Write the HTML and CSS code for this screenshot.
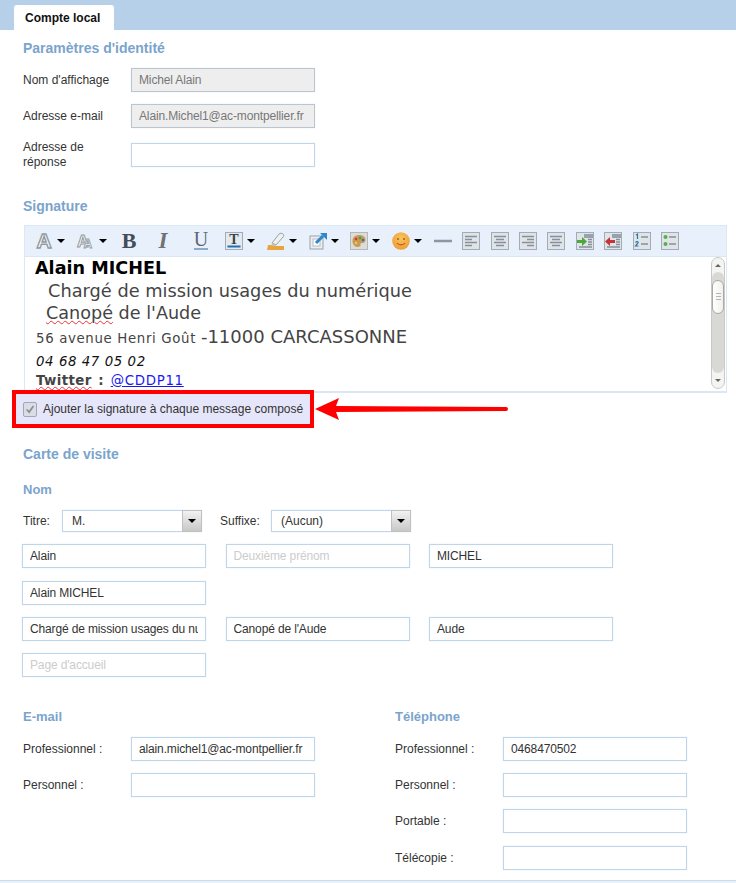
FILE: index.html
```html
<!DOCTYPE html>
<html lang="fr">
<head>
    <meta charset="UTF-8">
    <title>Compte local</title>
    <link rel="stylesheet" href="styles.css">
</head>
<body>
    <div class="tab-bar">
        <div class="tab">Compte local</div>
    </div>

    <div class="content">
        <h2 class="section-title title-identity">Paramètres d'identité</h2>
        <div class="form-row">
            <label>Nom d'affichage</label>
            <input type="text" class="field field-locked" value="Michel Alain" readonly>
        </div>
        <div class="form-row">
            <label>Adresse e-mail</label>
            <input type="text" class="field field-locked" value="Alain.Michel1@ac-montpellier.fr" readonly>
        </div>
        <div class="form-row">
            <label class="label-wrap">Adresse de réponse</label>
            <input type="text" class="field">
        </div>

        <h2 class="section-title title-signature">Signature</h2>
        <div class="editor">
            <div class="toolbar">
                <svg class="tool" viewBox="0 0 18 18"><text x="9" y="16" text-anchor="middle" class="ic-a">A</text></svg>
                <span class="caret"></span>
                <svg class="tool" viewBox="0 0 18 18"><text x="0" y="15" class="ic-a ic-a-md">A<tspan class="ic-a-sm" dx="-5" dy="1">A</tspan></text></svg>
                <span class="caret"></span>
                <svg class="tool tool-b" viewBox="0 0 18 18"><text x="9" y="16" text-anchor="middle" class="ic-b">B</text></svg>
                <svg class="tool tool-i" viewBox="0 0 18 18"><text x="9" y="16" text-anchor="middle" class="ic-i">I</text></svg>
                <svg class="tool tool-u" viewBox="0 0 18 18"><text x="9" y="14" text-anchor="middle" class="ic-u">U</text><path d="M2 17h14" stroke="#6d93bd" stroke-width="1.5"/></svg>
                <svg class="tool" viewBox="0 0 18 18"><rect x=".5" y=".5" width="17" height="17" fill="#e4e9ee" stroke="#a4adb6"/><text x="9" y="12" text-anchor="middle" class="ic-t">T</text><path d="M2.500 14.500h13" stroke="#1f6fb5" stroke-width="2"/></svg>
                <span class="caret"></span>
                <svg class="tool" viewBox="0 0 18 18"><path d="M5 11l7-9c1-1 3-1 4 0s1 2 0 3l-7 8-4-2z" fill="#eef0f1" stroke="#9aa2a8"/><path d="M1 13h4l4 1h8v4H0z" fill="#e8a53e"/><path d="M5 11l-1 3h5z" fill="#c9c2a8"/></svg>
                <span class="caret"></span>
                <svg class="tool" viewBox="0 0 18 18"><rect x="1" y="4" width="13" height="13" fill="#eceef0" stroke="#99a2aa"/><rect x="4" y="7" width="7" height="7" fill="#fff" stroke="#b8bec4"/><path d="M7 11l7-7" stroke="#2d87c9" stroke-width="3"/><path d="M11 1h7v7z" fill="#2d87c9"/></svg>
                <span class="caret"></span>
                <svg class="tool" viewBox="0 0 18 18"><rect x=".5" y=".5" width="17" height="17" fill="#dcdcd8" stroke="#b5b8ba"/><path d="M2.500 9c0-4 3-6 7-6s6 2.500 6 5-2 3-3.500 3-2 1-1.500 2-1 2-3 2-5-2-5-6z" fill="#c9995c"/><circle cx="6" cy="7" r="1.300" fill="#d33"/><circle cx="10" cy="6" r="1.300" fill="#3a3"/><circle cx="13" cy="8" r="1.300" fill="#27b"/><circle cx="6" cy="11" r="1.300" fill="#ec3"/></svg>
                <span class="caret"></span>
                <svg class="tool" viewBox="0 0 18 18"><defs><radialGradient id="sunny" cx=".5" cy=".35" r=".7"><stop offset="0" stop-color="#f8c45c"/><stop offset="1" stop-color="#ee9a35"/></radialGradient></defs><circle cx="9" cy="9" r="8.800" fill="url(#sunny)"/><circle cx="6" cy="7" r="1" fill="#a5601c"/><circle cx="12" cy="7" r="1" fill="#a5601c"/><path d="M5 11c2 2.500 6 2.500 8 0" fill="none" stroke="#c0561c" stroke-width="1.200"/></svg>
                <span class="caret"></span>
                <svg class="tool tool-sq" viewBox="0 0 18 18"><path d="M0 9h18" stroke="#8d979f" stroke-width="2.500"/></svg>

                <svg class="tool tool-sq" viewBox="0 0 18 18"><rect x=".5" y=".5" width="17" height="17" class="ic-box"/><path d="M3 4.500h12M3 7.500h7M3 10.500h12M3 13.500h7" class="ic-line"/></svg>
                <svg class="tool tool-sq" viewBox="0 0 18 18"><rect x=".5" y=".5" width="17" height="17" class="ic-box"/><path d="M3 4.500h12M5 7.500h8M3 10.500h12M5 13.500h8" class="ic-line"/></svg>
                <svg class="tool tool-sq" viewBox="0 0 18 18"><rect x=".5" y=".5" width="17" height="17" class="ic-box"/><path d="M3 4.500h12M8 7.500h7M3 10.500h12M8 13.500h7" class="ic-line"/></svg>
                <svg class="tool tool-sq" viewBox="0 0 18 18"><rect x=".5" y=".5" width="17" height="17" class="ic-box"/><path d="M3 4.500h12M5 7.500h8M3 10.500h12M5 13.500h8" class="ic-line"/></svg>
                <svg class="tool tool-sq" viewBox="0 0 18 18"><rect x=".5" y=".5" width="17" height="17" class="ic-box"/><rect x="8" y="2" width="9" height="4" fill="#98a2aa"/><path d="M12 7.500h4M12 10h4M12 12.500h4M3 15h13" class="ic-line"/><path d="M1 8h5V5l5 4.500L6 14v-3H1z" fill="#4da83a"/></svg>
                <svg class="tool tool-sq" viewBox="0 0 18 18"><rect x=".5" y=".5" width="17" height="17" class="ic-box"/><rect x="8" y="2" width="9" height="4" fill="#98a2aa"/><path d="M12 7.500h4M12 10h4M12 12.500h4M3 15h13" class="ic-line"/><path d="M11 8H6V5L1 9.500 6 14v-3h5z" fill="#c8323a"/></svg>
                <svg class="tool tool-sq" viewBox="0 0 18 18"><rect x=".5" y=".5" width="17" height="17" class="ic-box"/><path d="M8 5h7M8 12h7" class="ic-line"/><path d="M3 3l1.500-1v5M2.500 10.500c1-1.500 3-1 2.500.5l-2.500 3h3" fill="none" stroke="#2a7ab0" stroke-width="1.200"/></svg>
                <svg class="tool tool-sq" viewBox="0 0 18 18"><rect x=".5" y=".5" width="17" height="17" class="ic-box"/><path d="M8 5h7M8 12h7" class="ic-line"/><circle cx="4.500" cy="5" r="2" fill="#55b04a"/><circle cx="4.500" cy="12" r="2" fill="#55b04a"/></svg>
            </div>
            <div class="editor-main">
                <div class="editor-body">
                    <div class="sig-name">Alain MICHEL</div>
                    <div class="sig-line sig-job">Chargé de mission usages du numérique</div>
                    <div class="sig-line sig-org"><span class="misspelled">Canopé</span> de l'Aude</div>
                    <div class="sig-address"><span class="sig-small">56 avenue Henri Goût </span>-11000 CARCASSONNE</div>
                    <div class="sig-phone">04 68 47 05 02</div>
                    <div class="sig-twitter"><strong class="misspelled">Twitter</strong> <strong>:</strong> <a href="#">@CDDP11</a></div>
                </div>
                <div class="scrollbar">
                    <span class="sb-up"></span>
                    <div class="sb-track"><div class="sb-thumb"></div></div>
                    <span class="sb-down"></span>
                </div>
            </div>
        </div>

        <div class="sig-option">
            <span class="checkbox">
                <svg viewBox="0 0 14 14"><path d="M3 7l3 3 5-7" fill="none" stroke="#8a8f96" stroke-width="2"/></svg>
            </span>
            <span>Ajouter la signature à chaque message composé</span>
            <svg class="red-arrow" viewBox="0 0 196 24"><path d="M1 12L25 1l-3 8 170 1a2 2 0 0 1 0 4L22 15l3 8z" fill="#f00"/></svg>
        </div>

        <h2 class="section-title title-card">Carte de visite</h2>
        <h3 class="section-title title-sub title-name">Nom</h3>

        <div class="select-row">
            <label>Titre:</label>
            <div class="select select-title"><span>M.</span><span class="select-btn"><i class="caret"></i></span></div>
            <label class="label-suffix">Suffixe:</label>
            <div class="select"><span>(Aucun)</span><span class="select-btn"><i class="caret"></i></span></div>
        </div>

        <div class="name-grid name-grid-first">
            <input type="text" class="field" value="Alain">
            <input type="text" class="field" placeholder="Deuxième prénom">
            <input type="text" class="field" value="MICHEL">
        </div>
        <div class="name-grid">
            <input type="text" class="field" value="Alain MICHEL">
        </div>
        <div class="name-grid">
            <input type="text" class="field" value="Chargé de mission usages du numérique">
            <input type="text" class="field" value="Canopé de l'Aude">
            <input type="text" class="field" value="Aude">
        </div>
        <div class="name-grid">
            <input type="text" class="field" placeholder="Page d'accueil">
        </div>

        <div class="contact-cols">
            <div>
                <h3 class="section-title title-sub title-contact">E-mail</h3>
                <div class="contact-row">
                    <label>Professionnel :</label>
                    <input type="text" class="field" value="alain.michel1@ac-montpellier.fr">
                </div>
                <div class="contact-row">
                    <label>Personnel :</label>
                    <input type="text" class="field">
                </div>
            </div>
            <div>
                <h3 class="section-title title-sub title-contact">Téléphone</h3>
                <div class="contact-row">
                    <label>Professionnel :</label>
                    <input type="text" class="field" value="0468470502">
                </div>
                <div class="contact-row">
                    <label>Personnel :</label>
                    <input type="text" class="field">
                </div>
                <div class="contact-row">
                    <label>Portable :</label>
                    <input type="text" class="field">
                </div>
                <div class="contact-row contact-last">
                    <label>Télécopie :</label>
                    <input type="text" class="field">
                </div>
            </div>
        </div>
    </div>

    <div class="page-bottom"></div>
</body>
</html>
```

FILE: styles.css
```css
:root {
    --color-bar: #b5d0e8;
    --color-title: #7ba4cc;
    --color-border: #bfd5ea;
    --color-text: #333333;
}

* {
    margin: 0;
    padding: 0;
    box-sizing: border-box;
    font-family: 'Liberation Sans', Arial, sans-serif;
}

body {
    background-color: #ffffff;
    color: var(--color-text);
    font-size: 12px;
    height: 883px;
    overflow: hidden;
}

/* Onglet */
.tab-bar {
    height: 30px;
    padding: 5px 0 0 14px;
    background-color: var(--color-bar);
}

.tab {
    width: 100px;
    height: 25px;
    padding-left: 11px;
    background-color: #ffffff;
    border-radius: 3px 3px 0 0;
    color: #111111;
    font-size: 12px;
    font-weight: 700;
    line-height: 26px;
}

.content {
    padding-left: 23px;
}

.section-title {
    color: var(--color-title);
    font-size: 14px;
    font-weight: 700;
    line-height: 16px;
}

.title-sub { font-size: 13px; }
.title-identity { margin-top: 10px; margin-bottom: 12px; }
.title-signature { margin-top: 28px; margin-bottom: 11px; }
.title-card { margin-top: 18px; }
.title-name { margin-top: 20px; margin-bottom: 12px; }
.title-contact { margin-bottom: 12px; }

/* Champs */
.form-row,
.contact-row {
    display: grid;
    grid-template-columns: 108px 184px;
    align-items: center;
    margin-bottom: 12px;
}

.form-row label,
.contact-row label,
.select-row label {
    line-height: 15px;
}

.label-wrap {
    width: 80px;
}

.field {
    display: block;
    width: 184px;
    height: 24px;
    padding: 0 7px;
    background-color: #ffffff;
    border: 1px solid var(--color-border);
    box-shadow: 0 0 1px #d5e4f3;
    color: var(--color-text);
    font-size: 12px;
    letter-spacing: -0.14px;
    outline: none;
}

.field-locked {
    background-color: #eeeeee;
    border-color: #b9c5d1;
    color: #777777;
}

.field::placeholder {
    color: #cccccc;
    opacity: 1;
}

/* Editeur de signature */
.editor {
    width: 703px;
    margin-left: 1px;
    height: 168px;
    border: 2px solid #dbe7f3;
    border-top-width: 1px;
    border-left-width: 1px;
    border-right-width: 1px;
}

.toolbar {
    display: flex;
    align-items: center;
    height: 31px;
    padding: 0 0 0 10px;
    background-color: #e8f1fb;
    border-bottom: 1px solid #dbe7f3;
}

.tool {
    flex: none;
    width: 18px;
    height: 18px;
    margin-right: 12px;
    overflow: visible;
}

.tool:has(+ .caret) {
    margin-right: 4px;
}

.caret {
    display: block;
    flex: none;
    width: 0;
    height: 0;
    margin-right: 11.7px;
    border-top: 4px solid #000000;
    border-left: 4px solid transparent;
    border-right: 4px solid transparent;
}

.tool-b { margin-left: 2px; margin-right: 16px; }
.tool-i { margin-right: 20px; }
.tool-u { margin-right: 15px; }
.tool-sq { margin-right: 10.4px; }

.ic-a {
    font-family: 'Liberation Sans', sans-serif;
    font-size: 21px;
    font-weight: 700;
    fill: #ffffff;
    stroke: #929aa1;
    stroke-width: 1.4;
}

.ic-a-md { font-size: 16px; stroke-width: 1; }
.ic-a-sm { font-size: 12px; stroke-width: 0.8; }

.ic-b {
    font-family: 'Liberation Serif', serif;
    font-size: 22px;
    font-weight: 700;
    fill: #434c58;
}

.ic-i {
    font-family: 'Liberation Serif', serif;
    font-size: 23px;
    font-style: italic;
    font-weight: 700;
    fill: #6e7378;
}

.ic-u {
    font-family: 'Liberation Serif', serif;
    font-size: 20px;
    fill: #5d6670;
}

.ic-t {
    font-family: 'Liberation Serif', serif;
    font-size: 14px;
    font-weight: 700;
    fill: #39424a;
}

.ic-box {
    fill: #dfe4e8;
    stroke: #a3acb4;
}

.ic-line {
    fill: none;
    stroke: #87909a;
    stroke-width: 1.5;
}

.editor-main {
    display: flex;
    height: 134px;
    background-color: #ffffff;
}

.editor-body {
    flex: 1;
    padding-left: 10px;
    overflow: hidden;
    color: #444444;
    white-space: nowrap;
}

.editor-body * {
    font-family: 'DejaVu Sans', Verdana, sans-serif;
}

.sig-name {
    color: #000000;
    font-size: 17.6px;
    font-weight: 700;
    line-height: 22px;
}

.sig-line {
    font-size: 17.78px;
    line-height: 23px;
}

.sig-job { padding-left: 13px; }
.sig-org { padding-left: 11px; font-size: 17.6px; }

.sig-address {
    font-size: 18px;
    line-height: 24px;
    padding-left: 1px;
}

.sig-small {
    font-size: 13.33px;
    letter-spacing: 0.65px;
}

.sig-phone {
    padding-left: 1px;
    color: #111111;
    font-size: 13.33px;
    font-style: italic;
    letter-spacing: 0.57px;
    line-height: 21px;
}

.sig-twitter {
    padding-left: 1px;
    font-size: 13.33px;
    line-height: 18px;
    letter-spacing: 0.4px;
    word-spacing: 2px;
}

.sig-twitter a {
    color: #1a1aee;
    letter-spacing: 0.7px;
}

.misspelled {
    text-decoration: underline wavy #e33;
    text-decoration-thickness: 1px;
}

/* Barre de defilement */
.scrollbar {
    display: flex;
    flex: none;
    flex-direction: column;
    align-items: center;
    width: 14px;
    height: 132px;
    margin-right: 1px;
    background-color: #f4f4f2;
    border: 1px solid #c9c9c5;
    border-radius: 7px;
}

.sb-up,
.sb-down {
    flex: none;
    width: 0;
    height: 0;
    border-left: 3px solid transparent;
    border-right: 3px solid transparent;
}

.sb-up {
    margin: 6px 0 5px;
    border-bottom: 3px solid #666666;
}

.sb-down {
    margin: 6px 0;
    border-top: 3px solid #666666;
}

.sb-track {
    flex: 1;
    width: 100%;
    padding-top: 8px;
    background-color: #d8d8d4;
    border-radius: 6px;
}

.sb-thumb {
    display: flex;
    align-items: center;
    justify-content: center;
    height: 34px;
    background: linear-gradient(to right, #ffffff, #f0f0ee);
    border: 1px solid #a9a9a5;
    border-radius: 6px;
}

.sb-thumb::after {
    content: "";
    width: 5px;
    height: 8px;
    background: repeating-linear-gradient(to bottom, #b5b5b1 0, #b5b5b1 1px, transparent 1px, transparent 3px);
}

/* Option signature */
.sig-option {
    position: relative;
    display: flex;
    align-items: center;
    width: 302px;
    height: 38px;
    margin: -3px 0 0 -11px;
    padding-left: 7px;
    background-color: #e6e6fa;
    border: 4px solid #ff0000;
    font-size: 12px;
    white-space: nowrap;
}

.checkbox {
    flex: none;
    width: 14px;
    height: 15px;
    margin-right: 6px;
    background-color: #dcdce6;
    border: 1px solid #a5a5b5;
    border-radius: 2px;
}

.checkbox svg {
    display: block;
    width: 12px;
    height: 13px;
}

.red-arrow {
    position: absolute;
    top: 3px;
    left: 298px;
    width: 196px;
    height: 24px;
}

/* Carte de visite */
.select-row {
    display: flex;
    align-items: center;
    height: 22px;
    margin-bottom: 12px;
}

.select-row label {
    width: 39px;
}

.select-row .label-suffix {
    width: 51px;
    margin-left: 18px;
}

.select {
    display: flex;
    align-items: center;
    justify-content: space-between;
    width: 140px;
    height: 22px;
    padding-left: 9px;
    background-color: #ffffff;
    border: 1px solid var(--color-border);
    box-shadow: 0 0 1px #d5e4f3;
}

.select-btn {
    display: flex;
    align-items: center;
    justify-content: center;
    width: 20px;
    height: 22px;
    margin-right: -1px;
    background: linear-gradient(to bottom, #f2f2f2, #c8c8c8);
    border: 1px solid #c0c0c0;
}

.select-btn .caret {
    margin: 0;
}

.name-grid {
    display: grid;
    grid-template-columns: repeat(3, 184px);
    column-gap: 19.5px;
    margin: 0 0 12px -1px;
}

.name-grid-first {
    margin-bottom: 13px;
}

.contact-cols {
    display: grid;
    grid-template-columns: 372px 292px;
    margin-top: 32px;
}

.contact-last {
    margin-top: 13px;
    margin-bottom: 0;
}

.page-bottom {
    height: 3px;
    margin-top: 10px;
    background-color: #eaf1f9;
    border-top: 1px solid #c9dcef;
}
```
